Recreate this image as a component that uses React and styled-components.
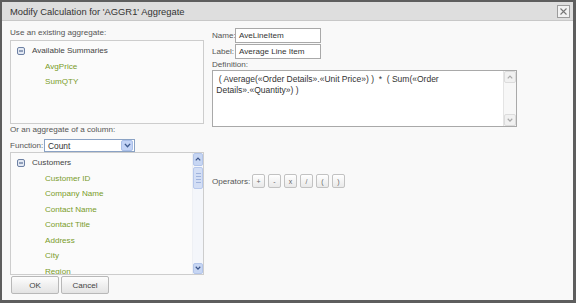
import React from "react";
import styled, { createGlobalStyle } from "styled-components";

const Global = createGlobalStyle`
  html, body { margin: 0; padding: 0; background: #f8f8f8; }
  * { box-sizing: border-box; }
  body { font-family: "Liberation Sans", Arial, sans-serif; }
`;

const Frame = styled.div`
  width: 576px;
  height: 303px;
  border: 2px solid #5e5e5e;
  border-right-width: 3px;
  border-bottom-width: 3px;
  background: #f9f9f9;
  display: flex;
  flex-direction: column;
  overflow: hidden;
  font-size: 8.1px;
  color: #555;
`;

const TitleBar = styled.div`
  height: 19px;
  flex: none;
  background: #dedede;
  border-bottom: 1px solid #c8c8c8;
  display: flex;
  align-items: center;
  justify-content: space-between;
  padding: 0 3px 0 8px;
`;

const Title = styled.span`
  font-size: 9.4px;
  color: #333;
`;

const CloseBtn = styled.div`
  width: 13px;
  height: 13px;
  border: 1px solid #9c9c9c;
  background: #f2f2f2;
  display: flex;
  align-items: center;
  justify-content: center;
`;

const Body = styled.div`
  flex: 1;
  display: flex;
  gap: 8px;
  padding-left: 8px;
`;

const LeftCol = styled.div`
  width: 194px;
  display: flex;
  flex-direction: column;
`;

const RightCol = styled.div`
  width: 305px;
  display: flex;
  flex-direction: column;
`;

const Caption = styled.div`
  line-height: ${(p) => p.$lh || 12}px;
  margin-top: ${(p) => p.$mt || 0}px;
  color: #555;
  white-space: nowrap;
`;

const TreeBox = styled.div`
  height: ${(p) => p.$h}px;
  margin-top: ${(p) => p.$mt || 0}px;
  border: 1px solid #cdcdcd;
  background: #fbfbfb;
  display: flex;
  overflow: hidden;
`;

const TreeContent = styled.div`
  flex: 1;
  padding: 2px 0 0 6px;
  overflow: hidden;
`;

const RootRow = styled.div`
  display: flex;
  align-items: center;
  gap: 7px;
  line-height: 15.5px;
  color: #444;
  white-space: nowrap;
`;

const Leaf = styled.div`
  margin-left: 28px;
  line-height: 15.5px;
  color: #7a9b2a;
  white-space: nowrap;
`;

const Scrollbar = styled.div`
  width: 11px;
  flex: none;
  display: flex;
  flex-direction: column;
  background: #f4f6fa;
  border-left: 1px solid #eef0f4;
`;

const ScrollArrow = styled.div`
  height: ${(p) => p.$h || 12}px;
  flex: none;
  background: ${(p) => (p.$blue ? "#c7d6f3" : "#f1f1f1")};
  border: 1px solid ${(p) => (p.$blue ? "#b3c5ea" : "#dcdcdc")};
  border-radius: 2px;
  display: flex;
  align-items: center;
  justify-content: center;
`;

const Thumb = styled.div`
  height: 22px;
  margin-top: 1px;
  background: #d3def5;
  border: 1px solid #b7c8ec;
  border-radius: 2px;
  display: flex;
  flex-direction: column;
  align-items: center;
  justify-content: center;
  gap: 2px;
`;

const Grip = styled.div`
  width: 5px;
  height: 1px;
  background: #9fb3dd;
`;

const Track = styled.div`
  flex: 1;
`;

const FieldRow = styled.div`
  display: flex;
  align-items: center;
  height: ${(p) => p.$h || 15}px;
  margin-top: ${(p) => p.$mt || 0}px;
`;

const FieldLabel = styled.span`
  width: ${(p) => p.$w}px;
  flex: none;
  color: #555;
  white-space: nowrap;
`;

const TextInput = styled.div`
  width: ${(p) => p.$w}px;
  height: 100%;
  border: 1px solid #a9a9a9;
  background: #fff;
  color: #333;
  padding-left: 3px;
  display: flex;
  align-items: center;
  white-space: nowrap;
`;

const Select = styled.div`
  width: 91px;
  height: 100%;
  border: 1px solid #8aa2c4;
  background: #fff;
  color: #333;
  display: flex;
  align-items: center;
  padding-left: 3px;
`;

const SelectText = styled.span`
  flex: 1;
  font-size: 8.4px;
`;

const SelectArrow = styled.div`
  width: 12px;
  height: 11px;
  margin-right: 1px;
  background: #c3d3f6;
  border: 1px solid #aabfe9;
  border-radius: 2px;
  display: flex;
  align-items: center;
  justify-content: center;
`;

const DefBox = styled.div`
  height: 57px;
  border: 1px solid #a9a9a9;
  background: #fff;
  display: flex;
`;

const DefText = styled.div`
  flex: 1;
  padding: 3px 0 0 1px;
  line-height: 11px;
  font-size: 8.5px;
  color: #333;
  white-space: pre;
`;

const GrayScroll = styled.div`
  width: 13px;
  flex: none;
  display: flex;
  flex-direction: column;
  justify-content: space-between;
  background: #f7f7f7;
  border-left: 1px solid #e4e4e4;
`;

const OpButtons = styled.div`
  display: flex;
  gap: 3px;
  margin-left: 2px;
`;

const OpButton = styled.div`
  width: 13px;
  height: 14px;
  border: 1px solid #c2c2c2;
  border-radius: 2px;
  background: linear-gradient(#ffffff, #e9e9e9);
  color: #666;
  font-size: 7px;
  display: flex;
  align-items: center;
  justify-content: center;
`;

const ButtonRow = styled.div`
  display: flex;
  gap: 2px;
  margin-top: 1px;
  padding-left: 1px;
`;

const DlgButton = styled.div`
  width: 48px;
  height: 18px;
  border: 1px solid #b8b8b8;
  border-radius: 2px;
  background: linear-gradient(#fdfdfd, #e3e3e3);
  color: #444;
  display: flex;
  align-items: center;
  justify-content: center;
`;

const Minus = () => (
  <svg width="8" height="8" viewBox="0 0 8 8">
    <rect x="0.5" y="0.5" width="7" height="7" rx="1.5" fill="#e3e9f3" stroke="#6d80a3" />
    <line x1="2" y1="4" x2="6" y2="4" stroke="#3f5683" strokeWidth="1" />
  </svg>
);

const Chevron = ({ up, color = "#3b5488", size = 7 }) => (
  <svg width={size} height={size * 0.7} viewBox="0 0 8 5.6">
    <polyline
      points={up ? "1,4.6 4,1.4 7,4.6" : "1,1 4,4.2 7,1"}
      fill="none"
      stroke={color}
      strokeWidth="1.6"
    />
  </svg>
);

const CloseIcon = () => (
  <svg width="9" height="9" viewBox="0 0 9 9">
    <path d="M1.5 1.5 L7.5 7.5 M7.5 1.5 L1.5 7.5" stroke="#777" strokeWidth="1.1" />
  </svg>
);

const columns = [
  "Customer ID",
  "Company Name",
  "Contact Name",
  "Contact Title",
  "Address",
  "City",
  "Region",
];

export default function App() {
  return (
    <>
      <Global />
      <Frame>
        <TitleBar>
          <Title>Modify Calculation for 'AGGR1' Aggregate</Title>
          <CloseBtn>
            <CloseIcon />
          </CloseBtn>
        </TitleBar>
        <Body>
          <LeftCol>
            <Caption $mt={6}>Use an existing aggregate:</Caption>
            <TreeBox $h={84} $mt={1}>
              <TreeContent>
                <RootRow>
                  <Minus />
                  Available Summaries
                </RootRow>
                <Leaf>AvgPrice</Leaf>
                <Leaf>SumQTY</Leaf>
              </TreeContent>
            </TreeBox>
            <Caption>Or an aggregate of a column:</Caption>
            <FieldRow $h={13} $mt={3}>
              <FieldLabel $w={34}>Function:</FieldLabel>
              <Select>
                <SelectText>Count</SelectText>
                <SelectArrow>
                  <Chevron color="#3e5a8e" size={7} />
                </SelectArrow>
              </Select>
            </FieldRow>
            <TreeBox $h={123}>
              <TreeContent>
                <RootRow>
                  <Minus />
                  Customers
                </RootRow>
                {columns.map((c) => (
                  <Leaf key={c}>{c}</Leaf>
                ))}
              </TreeContent>
              <Scrollbar>
                <ScrollArrow $blue $h={13}>
                  <Chevron up size={6} />
                </ScrollArrow>
                <Thumb>
                  <Grip />
                  <Grip />
                  <Grip />
                  <Grip />
                </Thumb>
                <Track />
                <ScrollArrow $blue $h={11}>
                  <Chevron size={6} />
                </ScrollArrow>
              </Scrollbar>
            </TreeBox>
            <ButtonRow>
              <DlgButton>OK</DlgButton>
              <DlgButton>Cancel</DlgButton>
            </ButtonRow>
          </LeftCol>
          <RightCol>
            <FieldRow $mt={7}>
              <FieldLabel $w={23}>Name:</FieldLabel>
              <TextInput $w={86}>AveLineItem</TextInput>
            </FieldRow>
            <FieldRow $mt={1}>
              <FieldLabel $w={23}>Label:</FieldLabel>
              <TextInput $w={86}>Average Line Item</TextInput>
            </FieldRow>
            <Caption $lh={11}>Definition:</Caption>
            <DefBox>
              <DefText>
                {"  ( Average(«Order Details».«Unit Price») )  *  ( Sum(«Order"}
                <br />
                {" Details».«Quantity») )"}
              </DefText>
              <GrayScroll>
                <ScrollArrow $h={12}>
                  <Chevron up color="#aaa" size={6} />
                </ScrollArrow>
                <ScrollArrow $h={12}>
                  <Chevron color="#aaa" size={6} />
                </ScrollArrow>
              </GrayScroll>
            </DefBox>
            <FieldRow $h={14} $mt={47}>
              <FieldLabel $w={38}>Operators:</FieldLabel>
              <OpButtons>
                {["+", "-", "x", "/", "(", ")"].map((o) => (
                  <OpButton key={o}>{o}</OpButton>
                ))}
              </OpButtons>
            </FieldRow>
          </RightCol>
        </Body>
      </Frame>
    </>
  );
}
